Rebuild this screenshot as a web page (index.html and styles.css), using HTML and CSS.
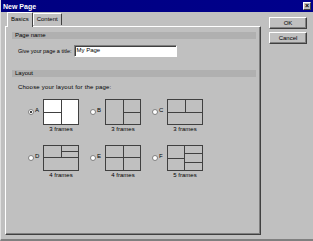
FILE: index.html
```html
<!DOCTYPE html>
<html lang="en">
<head>
  <meta charset="UTF-8">
  <title>New Page</title>
  <link rel="stylesheet" href="styles.css">
</head>
<body>
  <div class="dialog">
    <div class="titlebar">
      <span class="title">New Page</span>
      <span class="close">&#215;</span>
    </div>

    <div class="main">
      <div class="left">
        <div class="tabs">
          <span class="tab active">Basics</span>
          <span class="tab">Content</span>
        </div>

        <div class="panel">
          <div class="band">Page name</div>
          <div class="title-row">
            <label>Give your page a title:</label>
            <span class="input">My Page</span>
          </div>

          <div class="band">Layout</div>
          <p class="hint">Choose your layout for the page:</p>

          <div class="layouts">
            <div class="option">
              <span class="radio checked"></span>
              <span class="letter">A</span>
              <div class="thumb">
                <svg width="36" height="26" viewBox="0 0 36 26">
                  <rect x="0.5" y="0.5" width="35" height="25" fill="#fff" stroke="#404040"/>
                  <path d="M18.5 0v26M0 13.5h18" stroke="#404040"/>
                </svg>
                <span class="caption">3 frames</span>
              </div>
            </div>
            <div class="option">
              <span class="radio"></span>
              <span class="letter">B</span>
              <div class="thumb">
                <svg width="36" height="26" viewBox="0 0 36 26">
                  <rect x="0.5" y="0.5" width="35" height="25" fill="none" stroke="#404040"/>
                  <path d="M18.5 0v26M18 13.5h18" stroke="#404040"/>
                </svg>
                <span class="caption">3 frames</span>
              </div>
            </div>
            <div class="option">
              <span class="radio"></span>
              <span class="letter">C</span>
              <div class="thumb">
                <svg width="36" height="26" viewBox="0 0 36 26">
                  <rect x="0.5" y="0.5" width="35" height="25" fill="none" stroke="#404040"/>
                  <path d="M0 13.5h36M18.5 0v13" stroke="#404040"/>
                </svg>
                <span class="caption">3 frames</span>
              </div>
            </div>
            <div class="option">
              <span class="radio"></span>
              <span class="letter">D</span>
              <div class="thumb">
                <svg width="36" height="26" viewBox="0 0 36 26">
                  <rect x="0.5" y="0.5" width="35" height="25" fill="none" stroke="#404040"/>
                  <path d="M0 12.5h36M18.5 0v12M18 6.5h18" stroke="#404040"/>
                </svg>
                <span class="caption">4 frames</span>
              </div>
            </div>
            <div class="option">
              <span class="radio"></span>
              <span class="letter">E</span>
              <div class="thumb">
                <svg width="36" height="26" viewBox="0 0 36 26">
                  <rect x="0.5" y="0.5" width="35" height="25" fill="none" stroke="#404040"/>
                  <path d="M0 12.5h36M18.5 0v26" stroke="#404040"/>
                </svg>
                <span class="caption">4 frames</span>
              </div>
            </div>
            <div class="option">
              <span class="radio"></span>
              <span class="letter">F</span>
              <div class="thumb">
                <svg width="36" height="26" viewBox="0 0 36 26">
                  <rect x="0.5" y="0.5" width="35" height="25" fill="none" stroke="#404040"/>
                  <path d="M17.5 0v26M0 13.5h17M17 8.5h19M17 17.5h19" stroke="#404040"/>
                </svg>
                <span class="caption">5 frames</span>
              </div>
            </div>
          </div>
        </div>
      </div>

      <div class="buttons">
        <button>OK</button>
        <button>Cancel</button>
      </div>
    </div>
  </div>
</body>
</html>
```

FILE: styles.css
```css
:root {
  --face: #c0c0c0;
  --shadow: #808080;
  --dark: #404040;
  --light: #ffffff;
  --band: #b0b0b0;
}

* {
  margin: 0;
  padding: 0;
  box-sizing: border-box;
}

body {
  font-family: 'Liberation Sans', Arial, sans-serif;
  font-size: 6px;
  background-color: var(--face);
  color: #000;
  width: 313px;
  height: 241px;
  overflow: hidden;
}

.dialog {
  width: 313px;
  height: 241px;
  border-left: 1px solid #dfdfdf;
  border-bottom: 2px solid var(--shadow);
}

.titlebar {
  height: 12px;
  background: linear-gradient(to right, #000080, #00008c);
  display: flex;
  align-items: center;
  justify-content: space-between;
  padding: 0 2px 0 2px;
}

.title {
  color: #fff;
  font-weight: bold;
  font-size: 7px;
}

.close {
  width: 8px;
  height: 8px;
  background-color: var(--face);
  border: 1px solid;
  border-color: var(--light) var(--dark) var(--dark) var(--light);
  font-size: 7px;
  line-height: 5px;
  text-align: center;
  font-weight: bold;
}

.main {
  display: flex;
}

.left {
  width: 260px;
  padding-left: 4px;
}

.tabs {
  display: flex;
  height: 14px;
  padding-left: 2px;
  align-items: flex-end;
}

.tab {
  height: 12px;
  padding: 2px 3px 0;
  border: 1px solid;
  border-color: var(--light) var(--dark) transparent var(--light);
  border-bottom: none;
  border-radius: 1px 1px 0 0;
  margin-bottom: 1px;
}

.tab.active {
  height: 15px;
  padding-top: 3px;
  margin-bottom: -1px;
  position: relative;
  background-color: var(--face);
  z-index: 1;
}

.panel {
  height: 209px;
  border: 1px solid;
  border-color: var(--light) var(--dark) var(--dark) var(--light);
  box-shadow: inset -1px -1px 0 var(--shadow);
  padding: 5px 4px 0 6px;
}

.band {
  height: 7px;
  line-height: 7px;
  background-color: var(--band);
  padding-left: 3px;
}

.title-row {
  display: flex;
  align-items: center;
  padding-left: 6px;
  margin: 6px 0 13px;
}

.title-row label {
  flex: none;
  margin-right: 2px;
  font-size: 5.5px;
  white-space: nowrap;
}

.input {
  flex: none;
  width: 103px;
  height: 12px;
  line-height: 9px;
  padding-left: 2px;
  background-color: #fff;
  border: 1px solid;
  border-color: var(--shadow) var(--light) var(--light) var(--shadow);
  box-shadow: inset 1px 1px 0 var(--dark);
}

.hint {
  padding-left: 6px;
  margin-top: 7px;
  height: 15px;
  letter-spacing: 0.2px;
}

.layouts {
  display: grid;
  grid-template-columns: repeat(3, 62px);
  row-gap: 13px;
  padding-left: 16px;
}

.option {
  display: flex;
  align-items: flex-start;
}

.radio {
  width: 6px;
  height: 6px;
  margin-top: 10px;
  border-radius: 50%;
  background-color: #fff;
  border: 1px solid var(--shadow);
  position: relative;
}

.radio.checked::after {
  content: "";
  position: absolute;
  left: 1px;
  top: 1px;
  width: 2px;
  height: 2px;
  border-radius: 50%;
  background-color: #000;
}

.letter {
  width: 8px;
  margin-left: 1px;
  margin-top: 8px;
}

.thumb {
  display: flex;
  flex-direction: column;
  align-items: center;
}

.thumb svg {
  display: block;
}

.caption {
  margin-top: 1px;
}

.buttons {
  display: flex;
  flex-direction: column;
  gap: 3px;
  padding: 5px 0 0 8px;
}

button {
  width: 38px;
  height: 12px;
  font-family: inherit;
  font-size: 6px;
  background-color: var(--face);
  border: 1px solid;
  border-color: var(--light) var(--dark) var(--dark) var(--light);
  box-shadow: inset -1px -1px 0 var(--shadow);
}
```
